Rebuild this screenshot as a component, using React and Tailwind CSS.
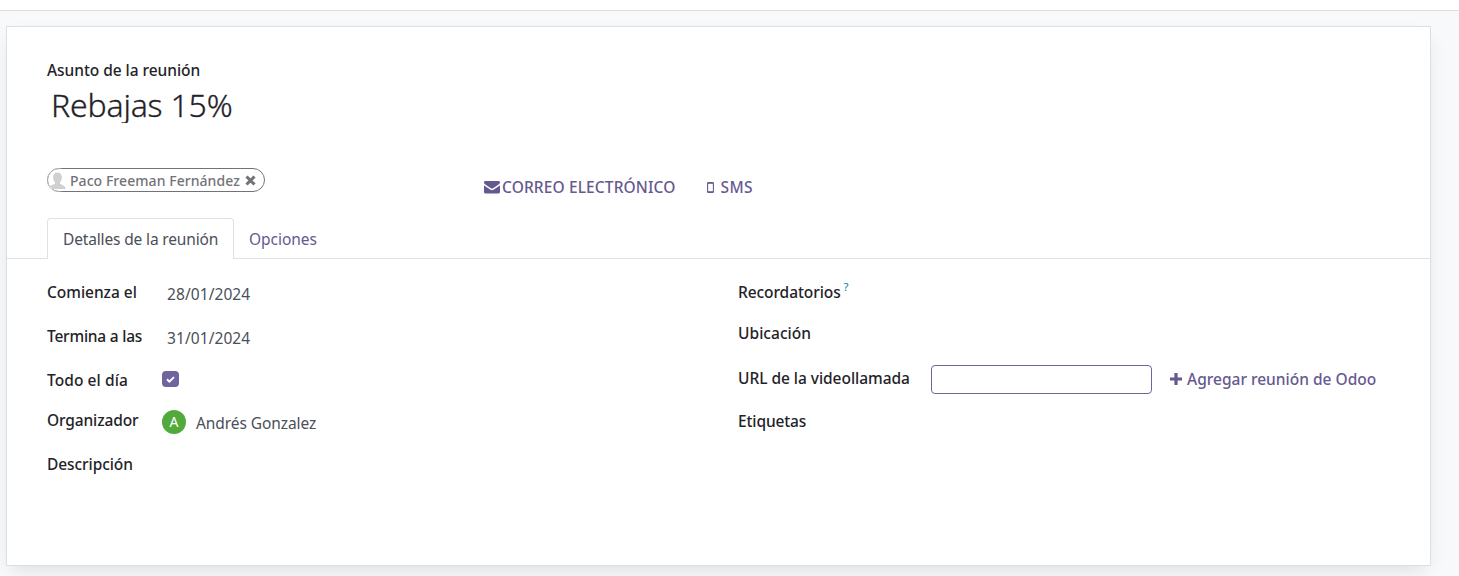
import React from "react";

const LABEL = "block whitespace-nowrap font-medium text-[15.5px] leading-5 text-[#1f2328]";
const VALUE = "block whitespace-nowrap text-[15.5px] leading-5 text-[#4a4f59]";

function Envelope() {
  return (
    <svg className="h-[13px] w-4" viewBox="0 0 16 13" fill="#66598f">
      <path d="M0 1.4C0 .6.6 0 1.4 0h13.2c.8 0 1.4.6 1.4 1.3 0 .9-.7 1.7-1.4 2.2L9.900 6.800C9.300 7.200 8.600 7.700 8 7.700s-1.300-.5-1.900-.9L1.400 3.500C.9 3.200 0 2.200 0 1.400Z" />
      <path d="M0 4.200c.3.300.6.500.9.700l4.500 3.100c.8.600 1.700 1.200 2.600 1.200s1.800-.6 2.600-1.200l4.500-3.100c.3-.2.600-.4.900-.7v6.900c0 .8-.6 1.400-1.400 1.400H1.400C.6 12.500 0 11.900 0 11.100Z" />
    </svg>
  );
}

function Phone() {
  return (
    <svg className="h-[11px] w-[7px]" viewBox="0 0 7 11" fill="none">
      <rect x=".6" y=".6" width="5.8" height="9.800" rx="1" stroke="#66598f" strokeWidth="1.100" />
      <path d="M.5 1h6M.5 9.800h6" stroke="#66598f" strokeWidth="1.300" />
    </svg>
  );
}

function Avatar() {
  return (
    <svg className="-my-px -ml-px h-6 w-6 shrink-0" viewBox="0 0 24 24">
      <defs>
        <clipPath id="round">
          <circle cx="12" cy="12" r="12" />
        </clipPath>
      </defs>
      <g clipPath="url(#round)">
        <path
          d="M10.500 4.500c2.700 0 4.500 2 4.400 5 0 2.200-1 3.800-1.900 4.700v1.500c1 1 4.500 1.500 5.500 4V21H1v-1.500c1-2 6-2.800 7-3.800v-1.500C7 13.200 6.100 11.700 6.100 9.500c0-3 1.800-5 4.400-5Z"
          fill="#d0d0d0"
        />
        <circle cx="12" cy="12" r="11.500" fill="none" stroke="#fff" strokeOpacity=".4" />
      </g>
    </svg>
  );
}

function Field({ label, tracking, height, children }) {
  return (
    <div className={"flex items-start " + height}>
      <div className="w-[115px] shrink-0">
        <span className={LABEL + " " + tracking}>{label}</span>
      </div>
      {children}
    </div>
  );
}

export default function App() {
  return (
    <div className="flex h-[576px] w-full flex-col overflow-hidden bg-[#f8f9fb] font-['Noto_Sans','Open_Sans',sans-serif]">
      <div className="h-[11px] shrink-0 border-b border-[#dee0e3] bg-white" />

      <main className="mt-[15px] ml-[6px] flex h-[540px] w-[1425px] shrink-0 flex-col border border-[#dcdfe4] bg-white shadow-[0_8px_20px_-6px_rgba(0,0,0,0.13)]">
        <header className="flex h-[191px] shrink-0 flex-col pl-10">
          <label className={LABEL + " mt-[33px] tracking-[-0.05px]"}>Asunto de la reunión</label>
          <h1 className="mt-1 ml-1 h-[39px] overflow-hidden text-[32px] leading-[42px] font-light tracking-[-0.2px] whitespace-nowrap text-[#1f2328] [-webkit-text-stroke:0.3px_#1f2328]">
            Rebajas 15%
          </h1>

          <div className="mt-[45px] flex items-start">
            <div className="w-[437px]">
              <span className="flex h-6 w-[218px] items-center rounded-full border border-[#737278] text-[#737278]">
                <Avatar />
                <span className="-ml-px pt-px text-[14px] leading-[22px] font-medium tracking-[0.06px] whitespace-nowrap">
                  Paco Freeman Fernández
                </span>
                <svg className="ml-[5px] h-[11px] w-[11px] shrink-0" viewBox="0 0 11 11">
                  <path d="M1.500 1.500l8 8M9.500 1.500l-8 8" stroke="currentColor" strokeWidth="3.100" />
                </svg>
              </span>
            </div>
            <a className="mt-[9px] flex h-5 items-center gap-[2px] text-[15.5px] leading-5 font-medium text-[#66598f]">
              <Envelope />
              <span className="tracking-[0.12px] whitespace-nowrap">CORREO ELECTRÓNICO</span>
            </a>
            <a className="mt-[9px] ml-[31px] flex h-5 items-center gap-[7px] text-[15.5px] leading-5 font-medium text-[#66598f]">
              <Phone />
              <span className="tracking-[0.4px]">SMS</span>
            </a>
          </div>
        </header>

        <nav className="flex h-[41px] shrink-0 border-b border-[#dee2e6] pl-10">
          <div className="h-[41px] w-[187px] rounded-t border border-b-0 border-[#dee2e6] bg-white pt-[10px] pl-[15px]">
            <span className={VALUE + " tracking-[-0.15px]"}>Detalles de la reunión</span>
          </div>
          <div className="pt-[11px] pl-[15px]">
            <span className="block text-[15.5px] leading-5 tracking-[-0.05px] text-[#66598f]">Opciones</span>
          </div>
        </nav>

        <section className="flex pt-[23px] pl-[40px]">
          <div className="flex w-[691px] flex-col">
            <Field label="Comienza el" tracking="tracking-[-0.03px]" height="h-11">
              <span className={VALUE + " mt-[2px] ml-[5px] tracking-[0.08px]"}>28/01/2024</span>
            </Field>
            <Field label="Termina a las" tracking="tracking-[-0.22px]" height="h-11">
              <span className={VALUE + " mt-[2px] ml-[5px] tracking-[0.08px]"}>31/01/2024</span>
            </Field>
            <Field label="Todo el día" tracking="tracking-[0.08px]" height="h-10">
              <span className="mt-[1px] flex h-4 w-[17px] items-center justify-center rounded-[4px] bg-[#71639e]">
                <svg className="h-[7px] w-[9px]" viewBox="0 0 9 7" fill="none">
                  <path d="M1 3.300l2.400 2.300L8 1.100" stroke="white" strokeWidth="2" />
                </svg>
              </span>
            </Field>
            <Field label="Organizador" tracking="tracking-[-0.13px]" height="h-11">
              <span className="flex h-6 w-6 items-center justify-center rounded-full bg-[#52a93c] text-[14px] leading-none text-white">
                A
              </span>
              <span className={VALUE + " mt-[3px] ml-[10px] tracking-[-0.08px]"}>Andrés Gonzalez</span>
            </Field>
            <Field label="Descripción" tracking="tracking-[-0.08px]" height="h-11" />
          </div>

          <div className="flex flex-col">
            <div className="flex h-[41px] items-start">
              <span className={LABEL + " tracking-[-0.08px]"}>Recordatorios</span>
              <span className="-mt-[3px] ml-[3px] text-[11.5px] leading-4 text-[#017e9a]">?</span>
            </div>
            <div className="h-[31px]">
              <span className={LABEL + " tracking-[0.04px]"}>Ubicación</span>
            </div>
            <div className="flex h-[57px] items-start">
              <span className={LABEL + " mt-[14px] w-[193px] tracking-[-0.04px]"}>URL de la videollamada</span>
              <input
                className="mt-[11px] h-[29px] w-[221px] rounded-[4px] border border-[#71639e] bg-white px-2 outline-none"
                aria-label="URL de la videollamada"
              />
              <a className="mt-[15px] ml-[18px] flex items-center gap-[5px] text-[#66598f]">
                <svg className="h-3 w-3 shrink-0" viewBox="0 0 12 12">
                  <path d="M6 0v12M0 6h12" stroke="currentColor" strokeWidth="3.200" />
                </svg>
                <span className="text-[15.5px] leading-5 font-medium tracking-[0px] whitespace-nowrap">
                  Agregar reunión de Odoo
                </span>
              </a>
            </div>
            <span className={LABEL + " tracking-[-0.12px]"}>Etiquetas</span>
          </div>
        </section>
      </main>
    </div>
  );
}
